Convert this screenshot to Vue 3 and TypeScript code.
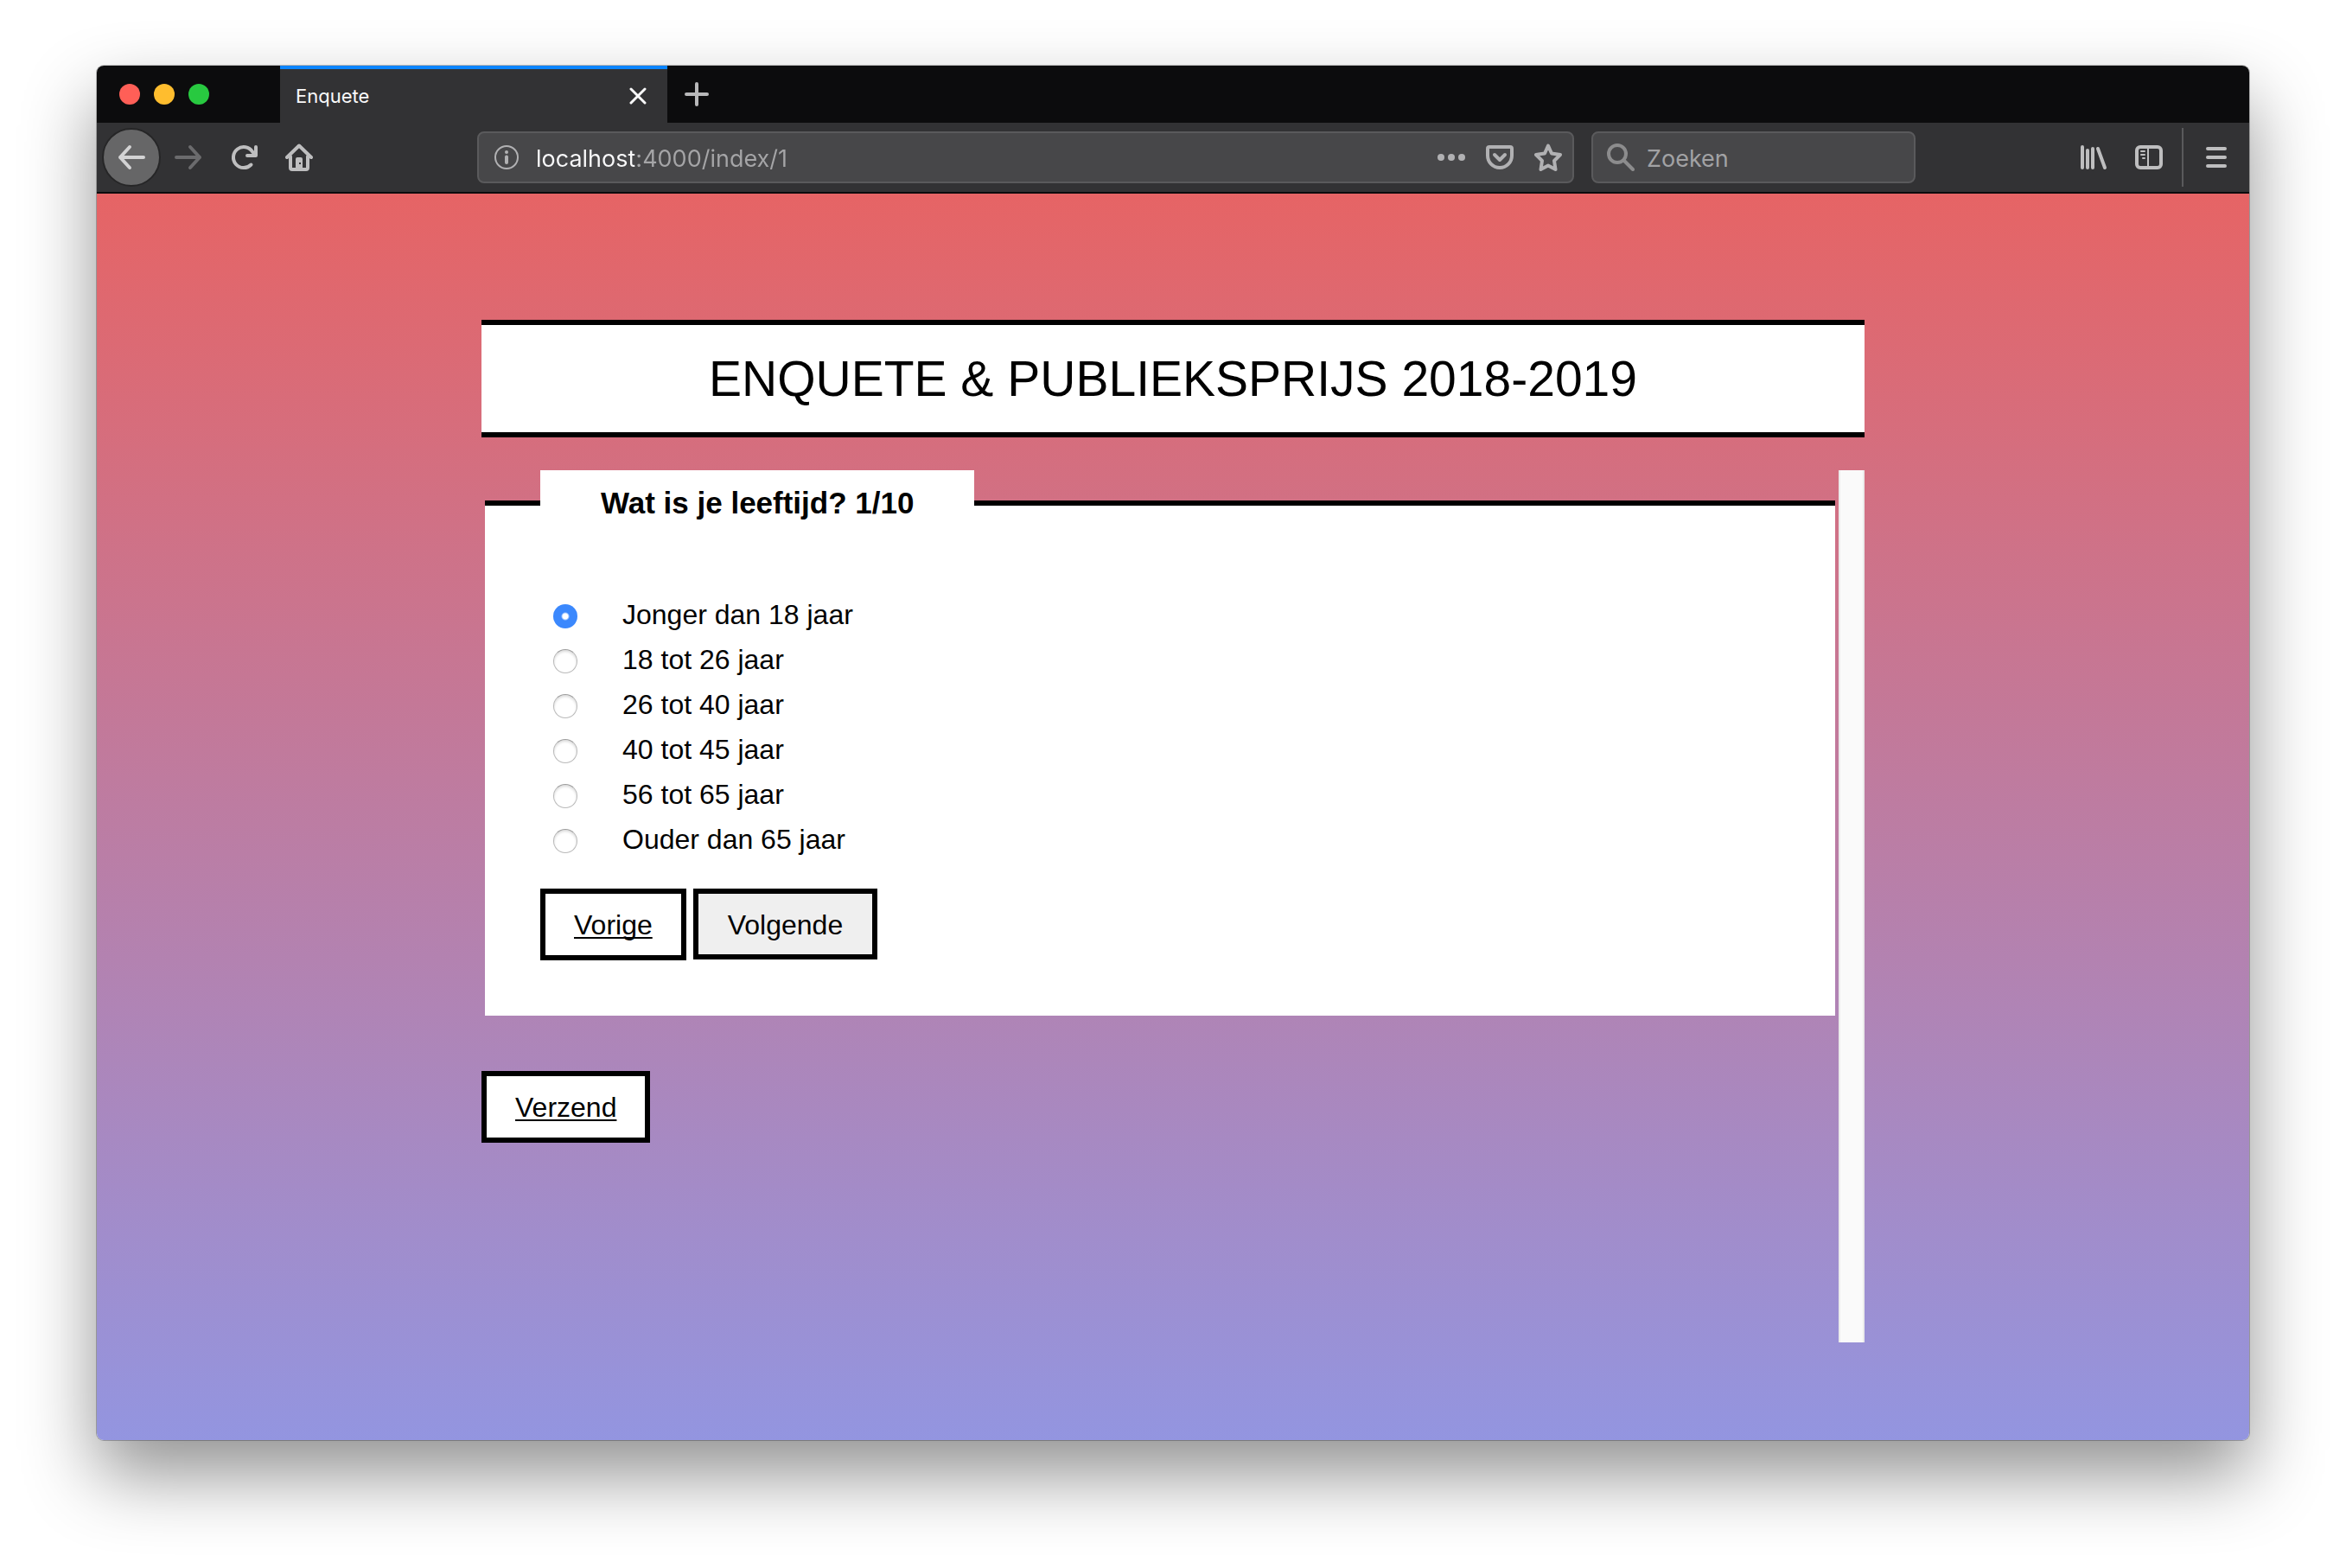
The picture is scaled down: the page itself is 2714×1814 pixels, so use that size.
<script setup lang="ts">
import { ref } from 'vue'

interface AgeOption {
  id: string
  label: string
}

const options: AgeOption[] = [
  { id: 'age-18', label: 'Jonger dan 18 jaar' },
  { id: 'age-26', label: '18 tot 26 jaar' },
  { id: 'age-40', label: '26 tot 40 jaar' },
  { id: 'age-45', label: '40 tot 45 jaar' },
  { id: 'age-65', label: '56 tot 65 jaar' },
  { id: 'age-up', label: 'Ouder dan 65 jaar' },
]

const selected = ref<string>('age-18')
const address = ref<string>('localhost:4000/index/1')
const query = ref<string>('')
</script>

<template>
  <div class="desktop">
    <div class="window">
      <div class="tabs">
        <div class="lights">
          <button type="button" class="light red" aria-label="Sluiten"></button>
          <button type="button" class="light yellow" aria-label="Minimaliseren"></button>
          <button type="button" class="light green" aria-label="Vergroten"></button>
        </div>
        <div class="tab">
          <span class="tab-title">Enquete</span>
          <button type="button" class="tab-close" aria-label="Tabblad sluiten">
            <svg width="20" height="20" viewBox="0 0 20 20"><path d="M2 2L18 18M18 2L2 18" stroke-width="3" /></svg>
          </button>
        </div>
        <button type="button" class="new-tab" aria-label="Nieuw tabblad">
          <svg width="28" height="28" viewBox="0 0 28 28"><path d="M14 2V26M2 14H26" stroke-width="4" /></svg>
        </button>
      </div>

      <div class="toolbar">
        <button type="button" class="tool back" aria-label="Terug">
          <svg class="icon" viewBox="0 0 32 32"><path d="M14 4L3 16L14 28M3 16H30" /></svg>
        </button>
        <button type="button" class="tool forward" aria-label="Vooruit" disabled>
          <svg class="icon" viewBox="0 0 32 32"><path d="M18 4L29 16L18 28M29 16H2" /></svg>
        </button>
        <button type="button" class="tool" aria-label="Vernieuwen">
          <svg class="icon" viewBox="0 0 32 32">
            <path d="M24.5 24.5A12 12 0 1 1 26 9.500L29 13M30 4V14H20" />
          </svg>
        </button>
        <button type="button" class="tool" aria-label="Startpagina">
          <svg class="icon" viewBox="0 0 32 32">
            <path d="M2 16L16 2.500L30 16M6 15V28Q6 30 8 30H24Q26 30 26 28V15" />
            <path class="solid" d="M12 30V18Q12 16 14 16H18Q20 16 20 18V30Z" />
            <path class="hole" d="M16 22h2v2h-2z" />
          </svg>
        </button>

        <div class="field address">
          <svg class="icon info" viewBox="0 0 32 32">
            <circle cx="16" cy="16" r="13" stroke-width="2" />
            <path d="M16 15.500V22" stroke-width="4" />
            <circle class="solid" cx="16" cy="10" r="2" />
          </svg>
          <input v-model="address" class="address-input" type="text" aria-label="Adres" />
          <div class="actions">
            <button type="button" class="action" aria-label="Paginaopties">
              <svg class="icon" viewBox="0 0 32 32">
                <circle class="solid" cx="4" cy="16" r="4" />
                <circle class="solid" cx="16" cy="16" r="4" />
                <circle class="solid" cx="28" cy="16" r="4" />
              </svg>
            </button>
            <button type="button" class="action" aria-label="Opslaan naar Pocket">
              <svg class="icon" viewBox="0 0 32 32">
                <path d="M4 4H28Q30 4 30 6V14A14 14 0 0 1 2 14V6Q2 4 4 4ZM10 13L16 19L22 13" />
              </svg>
            </button>
            <button type="button" class="action" aria-label="Bladwijzer maken">
              <svg class="icon" viewBox="0 0 32 32">
                <path d="M16 2.500L20 11.500L30 13L23 20L24.500 30L16 25.500L7.500 30L9 20L2 13L12 11.500Z" />
              </svg>
            </button>
          </div>
        </div>

        <div class="field search">
          <svg class="icon magnifier" viewBox="0 0 32 32">
            <circle cx="12" cy="12" r="10" />
            <path d="M19.500 19.500L30 30" />
          </svg>
          <input v-model="query" class="search-input" type="text" placeholder="Zoeken" aria-label="Zoeken" />
        </div>

        <button type="button" class="tool" aria-label="Bibliotheek">
          <svg class="icon" viewBox="0 0 32 32"><path d="M3 4V28M9 8V28M15 6V28M21 6L29 28" /></svg>
        </button>
        <button type="button" class="tool" aria-label="Zijbalk">
          <svg class="icon" viewBox="0 0 32 32">
            <rect x="2" y="4" width="28" height="24" rx="4" />
            <path d="M15 4V28M7 9H11M7 13H11M9 17H11" stroke-width="2" />
          </svg>
        </button>
        <span class="divider"></span>
        <button type="button" class="tool" aria-label="Menu">
          <svg class="icon" viewBox="0 0 32 32"><path d="M6 6H26M6 16H26M6 26H26" /></svg>
        </button>
      </div>

      <main class="page">
        <div class="column">
          <h1 class="title">ENQUETE &amp; PUBLIEKSPRIJS 2018-2019</h1>
          <div class="scroller">
            <form class="survey" @submit.prevent>
              <fieldset class="question">
                <legend class="legend">Wat is je leeftijd? 1/10</legend>
                <div class="options">
                  <div v-for="option in options" :key="option.id" class="option">
                    <input :id="option.id" v-model="selected" class="radio" type="radio" name="age" :value="option.id" />
                    <label class="option-label" :for="option.id">{{ option.label }}</label>
                  </div>
                </div>
                <div class="nav">
                  <a class="btn" href="#vorige">Vorige</a>
                  <button type="submit" class="btn next">Volgende</button>
                </div>
              </fieldset>
              <a class="btn send" href="#verzend">Verzend</a>
            </form>
            <div class="track"></div>
          </div>
        </div>
      </main>
    </div>
  </div>
</template>

<style>
body {
  margin: 0;
  background: #ffffff;
}
</style>

<style scoped>
* {
  box-sizing: border-box;
}

button {
  margin: 0;
  padding: 0;
  border: 0;
  background: none;
  font: inherit;
  color: inherit;
}

input {
  min-width: 0;
  margin: 0;
  padding: 0;
  border: 0;
  outline: 0;
  font: inherit;
}

svg {
  display: block;
  fill: none;
  stroke: currentColor;
  stroke-linecap: round;
  stroke-linejoin: round;
}

.desktop {
  display: flex;
  min-height: 100vh;
  padding: 76px 112px 148px;
  overflow: hidden;
}

.window {
  flex: 1;
  display: flex;
  flex-direction: column;
  min-width: 0;
  overflow: hidden;
  border-radius: 8px;
  box-shadow: 0 0 0 1px rgba(0, 0, 0, 0.25), 0 40px 84px rgba(0, 0, 0, 0.43);
  font-family: Inter, "Liberation Sans", sans-serif;
}

.tabs {
  display: flex;
  height: 66px;
  background: #0c0c0d;
}

.lights {
  display: flex;
  align-items: center;
  gap: 16px;
  width: 212px;
  padding-left: 26px;
}

.light {
  width: 24px;
  height: 24px;
  border-radius: 50%;
}

.red {
  background: #ff5f57;
}

.yellow {
  background: #ffbd2e;
}

.green {
  background: #28c940;
}

.tab {
  display: flex;
  align-items: center;
  justify-content: space-between;
  width: 448px;
  padding: 4px 24px 0 18px;
  background: linear-gradient(#0a84ff 4px, #323234 4px);
  color: #f9f9fa;
  font-size: 22px;
}

.new-tab {
  display: flex;
  align-items: center;
  justify-content: center;
  width: 68px;
  color: #b8b8b9;
}

.toolbar {
  display: flex;
  align-items: center;
  height: 82px;
  padding: 0 6px;
  border-bottom: 2px solid #0c0c0d;
  background: #323234;
  color: #bebebf;
}

.icon {
  flex: none;
  width: 32px;
  height: 32px;
  stroke-width: 4;
}

.solid {
  fill: currentColor;
  stroke: none;
}

.hole {
  fill: #323234;
  stroke: none;
}

.tool {
  display: flex;
  flex: none;
  align-items: center;
  justify-content: center;
  width: 64px;
  height: 64px;
}

.back {
  width: 68px;
  height: 68px;
  border: 2px solid #262627;
  border-radius: 50%;
  background: #666667;
  color: #d3d3d4;
}

.forward {
  color: #6b6b6d;
}

.field {
  display: flex;
  align-items: center;
  height: 60px;
  border: 2px solid #5a5a5c;
  border-radius: 8px;
  background: #474749;
  font-size: 27px;
}

.address {
  flex: 1;
  min-width: 0;
  margin: 0 20px 0 174px;
  padding: 0 12px 0 16px;
}

.info {
  color: #b1b1b3;
}

.address-input {
  flex: 1;
  height: 40px;
  margin: 0 18px;
  padding-top: 2px;
  background: linear-gradient(90deg, #f9f9fa 114px, #a5a5a7 114px);
  background-clip: text;
  -webkit-background-clip: text;
  -webkit-text-fill-color: transparent;
}

.actions {
  display: flex;
  gap: 24px;
  color: #b1b1b3;
}

.search {
  flex: none;
  gap: 14px;
  width: 375px;
  margin-right: 174px;
  padding: 0 16px;
}

.magnifier {
  color: #8c8c8d;
}

.search-input {
  flex: 1;
  height: 40px;
  padding-top: 2px;
  background: none;
  color: #f9f9fa;
}

.search-input::placeholder {
  color: #a2a2a4;
  opacity: 1;
}

.divider {
  width: 2px;
  height: 68px;
  margin: 0 6px;
  background: #5a5a5c;
}

.page {
  flex: 1;
  display: flex;
  justify-content: center;
  padding: 146px 32px 113px;
  background: linear-gradient(#e66465, #9395e0);
  color: #000000;
  font-family: "Liberation Sans", Arial, sans-serif;
  font-size: 32px;
}

.column {
  flex: 1;
  display: flex;
  flex-direction: column;
  gap: 38px;
  max-width: 1600px;
}

.title {
  margin: 0;
  border: solid #000000;
  border-width: 6px 0;
  background: #ffffff;
  font-size: 57px;
  font-weight: 400;
  line-height: 124px;
  text-align: center;
}

.scroller {
  flex: 1;
  display: flex;
}

.survey {
  flex: 1;
}

.question {
  margin: 0 4px 64px;
  padding: 0 64px 64px;
  border: 0;
  border-top: 6px solid #000000;
  background: #ffffff;
}

.legend {
  padding: 0 70px;
  background: #ffffff;
  font-size: 35px;
  font-weight: 700;
  line-height: 76px;
}

.options {
  padding: 67px 0 29px 15px;
}

.option {
  display: flex;
  align-items: center;
  height: 52px;
}

.radio {
  flex: none;
  width: 28px;
  height: 28px;
  margin-right: 52px;
  appearance: none;
  border: 1px solid #b9b9b9;
  border-top-color: #9c9c9c;
  border-radius: 50%;
  background: #ffffff;
  box-shadow: inset 0 2px 3px rgba(0, 0, 0, 0.14);
}

.radio:checked {
  border: 0;
  background: radial-gradient(circle, #ffffff 3px, #3b88fd 5px);
  box-shadow: none;
}

.option-label {
  padding-bottom: 4px;
}

.nav {
  display: flex;
  align-items: flex-start;
  gap: 8px;
}

.btn {
  display: inline-block;
  padding: 17px 33px 16px;
  border: 6px solid #000000;
  background: #ffffff;
  color: #000000;
  line-height: 38px;
  text-decoration: underline;
  text-decoration-thickness: 2px;
  text-underline-offset: 3px;
  text-decoration-skip-ink: none;
}

.next {
  padding: 17px 34px 15px;
  background: #efefef;
  text-decoration: none;
}

.track {
  width: 30px;
  border: solid #ebebeb;
  border-width: 0 2px;
  background: #fafafa;
}
</style>
